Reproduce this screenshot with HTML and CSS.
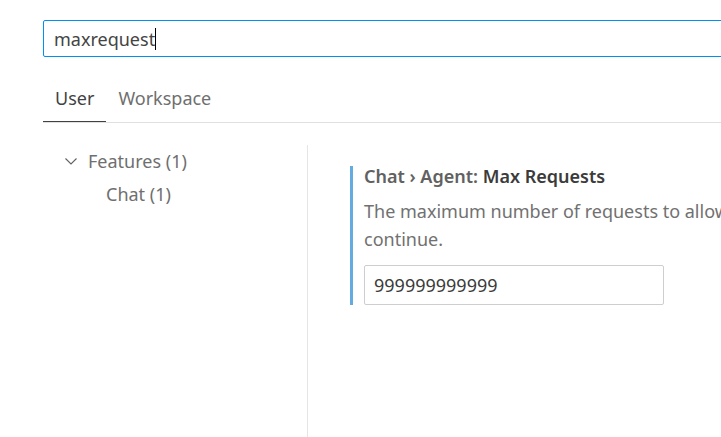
FILE: index.html
```html
<!DOCTYPE html>
<html>
<head>
<meta charset="utf-8">
<link rel="stylesheet" href="styles.css">
</head>
<body>
<div class="page">
  <div class="search">
    <span class="search-text">maxrequest</span><span class="caret"></span>
  </div>
  <div class="tabs">
    <div class="tab active">User</div>
    <div class="tab">Workspace</div>
  </div>
  <div class="body">
    <div class="tree">
      <div class="tree-row level1">
        <svg class="chev" width="16" height="16" viewBox="0 0 16 16"><path d="M2.5 5.5 L8 11 L13.5 5.5" fill="none" stroke="#616161" stroke-width="1.1"/></svg>
        <span>Features (1)</span>
      </div>
      <div class="tree-row level2"><span>Chat (1)</span></div>
    </div>
    <div class="divider"></div>
    <div class="content">
      <div class="setting">
        <div class="setting-title"><span class="cat">Chat › Agent: </span><span class="name">Max Requests</span></div>
        <div class="setting-desc"><span class="nowrap">The maximum number of requests to allow per-turn when using an agent. When the limit is reached, will ask to confirm to</span><br>continue.</div>
        <div class="num-input">999999999999</div>
      </div>
    </div>
  </div>
</div>
</body>
</html>
```
FILE: styles.css
```css
html, body {
  margin: 0;
  padding: 0;
  background: #ffffff;
  overflow: hidden;
}
body {
  width: 721px;
  height: 437px;
  font-family: "Noto Sans", "Open Sans", sans-serif;
  color: #616161;
}
.page {
  padding-top: 20px;
  padding-left: 43px;
}
.search {
  box-sizing: border-box;
  width: 700px;
  height: 37px;
  border: 1px solid #0090f1;
  border-radius: 2px;
  display: flex;
  align-items: center;
  padding-left: 10px;
  padding-top: 1px;
  font-size: 18px;
  color: #444444;
}
.caret {
  display: inline-block;
  width: 1px;
  height: 22px;
  background: #000;
  margin-left: 0;
}
.tabs {
  display: flex;
  margin-top: 20px;
  height: 45px;
  border-bottom: 1px solid #e0e0e0;
  width: 700px;
}
.tab {
  padding: 0 12px 3px;
  display: flex;
  align-items: center;
  font-size: 18px;
  color: #6f6f6f;
  box-sizing: border-box;
  height: 45px;
}
.tab.active {
  color: #424242;
  border-bottom: 1px solid #424242;
}
.body {
  display: flex;
  margin-left: -43px;
  padding-top: 22px;
  height: 292px;
}
.tree {
  width: 307px;
  padding-top: 0;
  margin-top: -1px;
  box-sizing: border-box;
}
.tree-row {
  display: flex;
  align-items: center;
  height: 33px;
  font-size: 18px;
  color: #6f6f6f;
}
.level1 { padding-left: 63px; }
.level1 .chev { margin-right: 9px; }
.level2 { padding-left: 106px; }
.divider {
  width: 1px;
  background: #e5e5e5;
  align-self: stretch;
}
.content {
  padding-left: 42px;
  padding-top: 21px;
  flex: 1;
  min-width: 0;
  overflow: hidden;
}
.setting {
  border-left: 3px solid #63abe0;
  padding-left: 11px;
  width: 1000px;
}
.setting-title {
  font-size: 18px;
  font-weight: 600;
  line-height: 20px;
  white-space: nowrap;
}
.setting-title .cat { color: #616161; }
.setting-title .name { color: #3b3b3b; }
.setting-desc {
  margin-top: 11px;
  font-size: 18px;
  line-height: 28px;
  color: #717171;
}
.nowrap { white-space: nowrap; }
.num-input {
  box-sizing: border-box;
  margin-top: 12px;
  width: 300px;
  height: 40px;
  border: 1px solid #cecece;
  border-radius: 2px;
  display: flex;
  align-items: center;
  padding-left: 9px;
  font-size: 18px;
  color: #3b3b3b;
}
```
